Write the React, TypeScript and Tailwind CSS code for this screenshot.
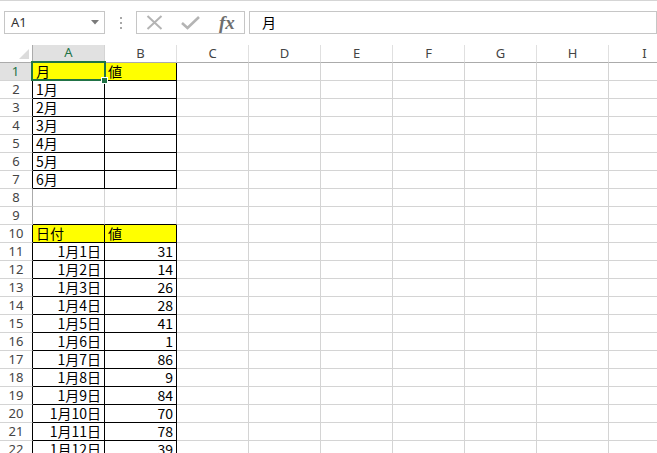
import React from 'react';

const COLS = ['A', 'B', 'C', 'D', 'E', 'F', 'G', 'H', 'I'];

type Cell = { text: string; right?: boolean; yellow?: boolean };

const values = [31, 14, 26, 28, 41, 1, 86, 9, 84, 70, 78, 39];

const buildRows = (): Cell[][] => {
  const rows: Cell[][] = [];
  rows.push([{ text: '月', yellow: true }, { text: '値', yellow: true }]);
  for (let m = 1; m <= 6; m++) rows.push([{ text: `${m}月` }, { text: '' }]);
  rows.push([]);
  rows.push([]);
  rows.push([{ text: '日付', yellow: true }, { text: '値', yellow: true }]);
  values.forEach((v, i) => {
    rows.push([
      { text: `1月${i + 1}日`, right: true },
      { text: String(v), right: true },
    ]);
  });
  return rows;
};

const rows = buildRows();

// rows 1-7 and 10-22 hold the two bordered tables, columns A and B
const inTable = (r: number, c: number) =>
  c >= 0 && c <= 1 && ((r >= 1 && r <= 7) || (r >= 10 && r <= 22));

const FormulaBar = () => (
  <div className="h-[45px] border-t border-[#d5d5d5] pt-[10px]">
    <div className="flex h-[23px]">
      <div className="ml-[4px] flex w-[101px] items-center justify-between border border-[#c6c6c6] pl-[6px] pr-[5px]">
        <span className="text-[13px] text-[#333]" style={{ fontFamily: '"Noto Sans", sans-serif' }}>
          A1
        </span>
        <svg width="8" height="5" viewBox="0 0 8 5">
          <path d="M0 0 H8 L4 4.5 Z" fill="#7a7a7a" />
        </svg>
      </div>
      <div className="flex w-[31px] flex-col items-center justify-center gap-[3px]">
        <span className="h-[2px] w-[2px] bg-[#a8a8a8]" />
        <span className="h-[2px] w-[2px] bg-[#a8a8a8]" />
        <span className="h-[2px] w-[2px] bg-[#a8a8a8]" />
      </div>
      <div className="flex w-[109px] items-center border border-[#c6c6c6] pl-[9px]">
        <svg width="17" height="15" viewBox="0 0 17 15">
          <path d="M1.5 1 L15.5 14 M15.5 1 L1.5 14" stroke="#b4b4b4" strokeWidth="2" fill="none" />
        </svg>
        <svg width="19" height="15" viewBox="0 0 19 15" className="ml-[18px]">
          <path d="M1 8 L6.5 13 L18 2" stroke="#b4b4b4" strokeWidth="2.6" fill="none" />
        </svg>
        <span
          className="ml-[19px] text-[19px] font-bold italic leading-none text-[#6e6e6e]"
          style={{ fontFamily: '"Liberation Serif", serif' }}
        >
          fx
        </span>
      </div>
      <div className="ml-[4px] flex flex-1 items-center border border-[#c6c6c6] pl-[12px]">
        <span className="text-[14px] text-black" style={{ fontFamily: '"Noto Sans CJK JP", sans-serif' }}>
          月
        </span>
      </div>
    </div>
  </div>
);

const HeaderRow = () => (
  <div className="flex h-[18px]">
    <div className="relative w-[33px] shrink-0 border-r border-b border-[#ababab] bg-white">
      <svg width="10" height="10" viewBox="0 0 10 10" className="absolute right-[3px] bottom-[3px]">
        <path d="M10 0 V10 H0 Z" fill="#dcdcdc" />
      </svg>
    </div>
    {COLS.map((c, i) => (
      <div
        key={c}
        className={
          i === 0
            ? 'flex w-[72px] shrink-0 items-center justify-center border-r border-b-2 border-r-[#d4d4d4] border-b-[#217346] bg-[#e1e1e1] text-[13px] text-[#217346]'
            : 'flex w-[72px] shrink-0 items-center justify-center border-r border-b border-r-[#e0e0e0] border-b-[#ababab] bg-white text-[13px] text-[#444]'
        }
        style={{ fontFamily: '"Noto Sans", sans-serif' }}
      >
        {c}
      </div>
    ))}
  </div>
);

const GridRow = ({ r }: { r: number }) => {
  const cells = rows[r - 1] ?? [];
  const selected = r === 1;
  return (
    <div className="flex h-[18px]">
      <div
        className={
          selected
            ? 'flex w-[33px] shrink-0 items-center justify-center border-r-2 border-b border-r-[#217346] border-b-[#d4d4d4] bg-[#e1e1e1] text-[13px] text-[#217346]'
            : inTable(r, 0)
              ? 'flex w-[33px] shrink-0 items-center justify-center border-r border-b border-r-black border-b-[#d4d4d4] bg-white text-[13px] text-[#444]'
              : 'flex w-[33px] shrink-0 items-center justify-center border-r border-b border-r-[#ababab] border-b-[#d4d4d4] bg-white text-[13px] text-[#444]'
        }
        style={{ fontFamily: '"Noto Sans", sans-serif' }}
      >
        {r}
      </div>
      {COLS.map((c, ci) => {
        const cell = cells[ci];
        const rightBlack = inTable(r, ci) || inTable(r, ci + 1);
        const bottomBlack = inTable(r, ci) || inTable(r + 1, ci);
        return (
          <div
            key={c}
            className={[
              'flex w-[72px] shrink-0 items-end overflow-hidden border-r border-b whitespace-nowrap text-[14px] leading-[17px] text-black',
              rightBlack ? 'border-r-black' : 'border-r-[#d4d4d4]',
              bottomBlack ? 'border-b-black' : 'border-b-[#d4d4d4]',
              cell?.yellow ? 'bg-[#ffff00]' : 'bg-white',
              cell?.right ? 'justify-end pr-[3px]' : 'justify-start pl-[3px]',
            ].join(' ')}
            style={{ fontFamily: '"Noto Sans CJK JP", sans-serif' }}
          >
            {cell?.text}
          </div>
        );
      })}
    </div>
  );
};

export default function App() {
  const rowNums = Array.from({ length: 22 }, (_, i) => i + 1);
  return (
    <div className="h-[453px] w-[657px] overflow-hidden bg-white">
      <FormulaBar />
      <div className="relative">
        <HeaderRow />
        {rowNums.map((r) => (
          <GridRow key={r} r={r} />
        ))}
        {/* active cell A1 */}
        <div className="pointer-events-none absolute top-[16px] left-[31px] h-[20px] w-[75px] border-2 border-[#217346]" />
        <div className="pointer-events-none absolute top-[32px] left-[101px] h-[7px] w-[7px] border border-white bg-[#217346]" />
      </div>
    </div>
  );
}
